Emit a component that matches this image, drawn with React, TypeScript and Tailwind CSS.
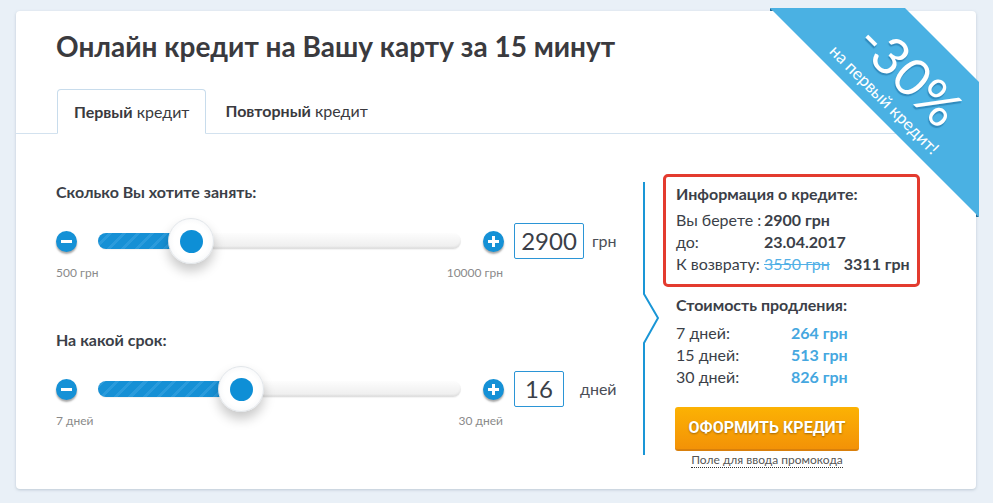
import React from "react";

const dark = "text-[#3b3f48]";

function RoundBtn({ plus }: { plus?: boolean }) {
  return (
    <div className="relative flex h-[21px] w-[21px] shrink-0 items-center justify-center rounded-full bg-[#1591d6] shadow-[0_2px_2px_rgba(0,0,0,0.35)]">
      <div className="h-[3px] w-[11px] bg-white" />
      {plus && <div className="absolute h-[11px] w-[3px] bg-white" />}
    </div>
  );
}

function Slider({ fill }: { fill: number }) {
  return (
    <div className="relative h-4 w-[363px] rounded-full bg-gradient-to-b from-[#fdfdfd] to-[#ececec] shadow-[inset_0_-2px_2px_rgba(0,0,0,0.06),0_1px_1px_rgba(0,0,0,0.05)]">
      <div
        className="absolute left-0 top-0 h-full rounded-l-full bg-[repeating-linear-gradient(-45deg,#1690d5_0px,#1690d5_7px,#2a9bdc_7px,#2a9bdc_10px)]"
        style={{ width: fill }}
      />
      <div
        className="absolute top-[-15px] flex h-[46px] w-[46px] items-center justify-center rounded-full border border-[#e2e6ea] bg-[radial-gradient(circle,#ffffff_55%,#eef0f3_100%)] shadow-[0_7px_12px_rgba(0,0,0,0.22)]"
        style={{ left: fill - 23 }}
      >
        <div className="h-[23px] w-[23px] rounded-full bg-[#0e8fd6]" />
      </div>
    </div>
  );
}

function SliderBlock({
  title,
  fill,
  value,
  unit,
  inputW,
  min,
  max,
  unitGap,
}: {
  title: string;
  fill: number;
  value: string;
  unit: string;
  inputW: string;
  min: string;
  max: string;
  unitGap: string;
}) {
  return (
    <div>
      <p className={`text-[16px] font-bold leading-5 ${dark}`}>{title}</p>
      <div className="mt-[19px] flex h-10 items-center">
        <RoundBtn />
        <div className="ml-[21px]">
          <Slider fill={fill} />
        </div>
        <div className="ml-[22px]">
          <RoundBtn plus />
        </div>
        <div
          className={`ml-[10px] flex h-[36px] items-center justify-center rounded-[2px] border border-[#2b95d6] text-[24px] ${dark} ${inputW}`}
        >
          {value}
        </div>
        <span className={`text-[16px] text-[#4a4e57] ${unitGap}`}>{unit}</span>
      </div>
      <div className="mt-1 flex w-[447px] justify-between text-[12px] leading-4 text-[#8a8a8a]">
        <span>{min}</span>
        <span>{max}</span>
      </div>
    </div>
  );
}

function Ribbon() {
  return (
    <div className="pointer-events-none absolute right-[-3px] top-[-3px] h-[209px] w-[209px]">
      <svg width="209" height="209" className="absolute inset-0">
        <polygon points="0,0 135,0 209,74 209,209" fill="#4ab1e3" />
        <polygon points="0,0 0,3 3,3" fill="#1d6e9c" />
        <polygon points="206,206 209,209 206,209" fill="#1d6e9c" />
      </svg>
      <div className="absolute left-[32px] top-[39px] flex w-[200px] rotate-45 flex-col items-center text-white">
        <span className="text-[52px] leading-[46px] [text-shadow:1px_2px_1px_rgba(0,70,120,0.35)]">
          -30%
        </span>
        <span className="mt-[4px] text-[17px] leading-5">на первый кредит!</span>
      </div>
    </div>
  );
}

export default function App() {
  return (
    <div
      className="min-h-screen bg-[#e9f0f7] pl-4 pt-[11px]"
      style={{ fontFamily: "Lato, 'Open Sans', sans-serif" }}
    >
      <div className="relative h-[478px] w-[960px] rounded-[4px] bg-white shadow-[0_1px_3px_rgba(110,130,150,0.35)]">
        <Ribbon />
        <div className="px-10 pt-[19px]">
          <h1 className="text-[28px] font-bold leading-8 text-[#3a3a3e]">
            Онлайн кредит на Вашу карту за 15 минут
          </h1>
        </div>
        <div className="mt-[27px] flex h-[45px] items-start border-b border-[#d3e2ef] px-10">
          <div className="ml-px flex h-[45px] items-center rounded-t-[4px] border border-b-white border-[#c8dcec] bg-white px-4 text-[16px] text-[#3a3a3e]">
            <b>Первый</b>&nbsp;кредит
          </div>
          <div className="flex h-[44px] items-center pl-[19px] text-[16px] text-[#3a3a3e]">
            <b>Повторный</b>&nbsp;кредит
          </div>
        </div>
        <div className="flex px-10">
          <div className="w-[587px] pt-12">
            <SliderBlock
              title="Сколько Вы хотите занять:"
              fill={93}
              value="2900"
              unit="грн"
              inputW="w-[70px]"
              min="500 грн"
              max="10000 грн"
              unitGap="ml-2"
            />
            <div className="mt-[49px]">
              <SliderBlock
                title="На какой срок:"
                fill={143}
                value="16"
                unit="дней"
                inputW="w-[50px]"
                min="7 дней"
                max="30 дней"
                unitGap="ml-4"
              />
            </div>
          </div>
          <div className="flex">
            <svg width="16" height="273" className="mt-[48px] shrink-0">
              <polyline
                points="1,0 1,112 15,136 1,161 1,273"
                fill="none"
                stroke="#1a96d6"
                strokeWidth="2"
              />
            </svg>
            <div className={`ml-1 mt-[40px] ${dark}`}>
              <div className="w-[257px] whitespace-nowrap rounded-[5px] border-[3px] border-[#e33b2f] pb-[9px] pl-[10px] pt-[6px] text-[16px] leading-[22px]">
                <p className="mb-1 font-bold">Информация о кредите:</p>
                <div className="grid grid-cols-[88px_auto]">
                  <span>Вы берете :</span>
                  <b>2900 грн</b>
                  <span>до:</span>
                  <b>23.04.2017</b>
                  <span>К возврату:</span>
                  <span className="flex gap-[14px]">
                    <span className="text-[#52b0e6] line-through">3550 грн</span>
                    <b>3311 грн</b>
                  </span>
                </div>
              </div>
              <div className="ml-[13px] mt-[7px] whitespace-nowrap text-[16px] leading-[22px]">
                <p className="mb-1.5 font-bold">Стоимость продления:</p>
                <div className="grid grid-cols-[115px_auto]">
                  <span>7 дней:</span>
                  <b className="text-[#45a7e0]">264 грн</b>
                  <span>15 дней:</span>
                  <b className="text-[#45a7e0]">513 грн</b>
                  <span>30 дней:</span>
                  <b className="text-[#45a7e0]">826 грн</b>
                </div>
              </div>
              <div className="ml-3 mt-[19px] flex w-[184px] flex-col items-center">
                <button
                  className="h-[44px] w-[184px] rounded-[3px] border-b-2 border-[#d9800c] bg-gradient-to-b from-[#fcb203] to-[#f39207] text-[16px] font-bold text-white [text-shadow:0_1px_2px_rgba(0,0,0,0.35)]"
                  style={{ fontFamily: "Roboto, sans-serif" }}
                >
                  ОФОРМИТЬ КРЕДИТ
                </button>
                <span className="mt-[2px] border-b border-dotted border-[#333] text-[12px] leading-[14px] text-[#555]">
                  Поле для ввода промокода
                </span>
              </div>
            </div>
          </div>
        </div>
      </div>
    </div>
  );
}
